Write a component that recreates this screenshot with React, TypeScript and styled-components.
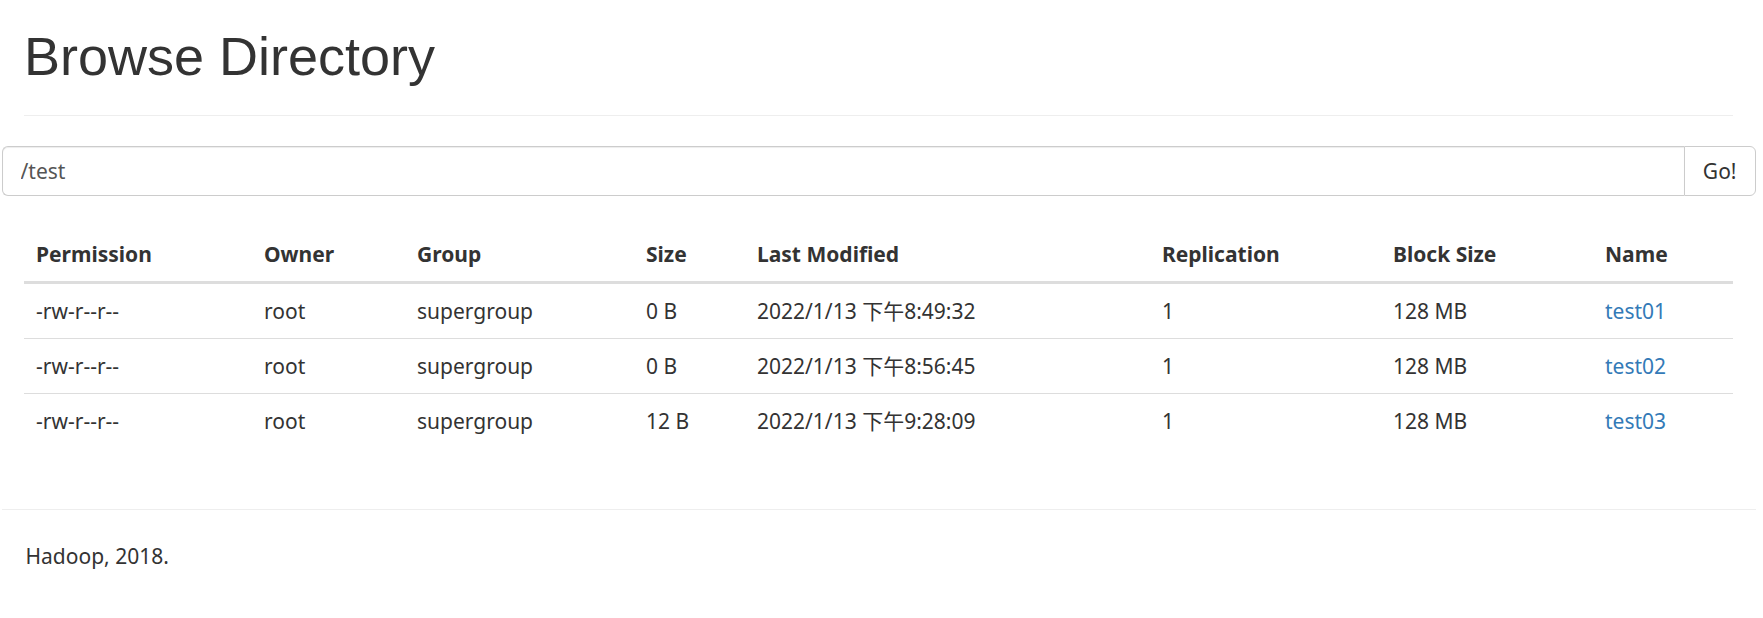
import styled, { createGlobalStyle } from "styled-components";

const GlobalStyle = createGlobalStyle`
	body {
		margin: 0;
		background: #fff;
		color: #333;
		font-family: "Noto Sans", "Noto Sans CJK SC", sans-serif;
		font-size: 21px;
		line-height: 30px;
	}
`;

const Page = styled.div`
	padding: 0 30px 0 24px;
`;

const PageHeader = styled.div`
	padding-bottom: 14px;
	border-bottom: 1px solid #eee;
`;

const Title = styled.h1`
	margin: 27px 0 15px;
	font-family: "Liberation Sans", Arial, sans-serif;
	font-size: 54px;
	font-weight: 400;
	line-height: 59px;
	color: #333;
`;

const SearchRow = styled.div`
	display: flex;
	margin: 30px -22.5px 0;
	height: 50px;
`;

const PathInput = styled.input`
	flex: 1;
	min-width: 0;
	height: 50px;
	box-sizing: border-box;
	padding: 0 18px;
	border: 1px solid #ccc;
	border-right: 0;
	border-radius: 6px 0 0 6px;
	box-shadow: inset 0 1px 1px rgba(0, 0, 0, 0.075);
	font-family: inherit;
	font-size: 21px;
	color: #555;
	outline: none;
`;

const GoButton = styled.button`
	height: 50px;
	box-sizing: border-box;
	padding: 0 18px;
	border: 1px solid #ccc;
	border-radius: 0 6px 6px 0;
	background: #fff;
	font-family: inherit;
	font-size: 21px;
	color: #333;
`;

const Table = styled.table`
	width: 100%;
	margin-top: 31px;
	border-collapse: collapse;
	table-layout: fixed;

	th,
	td {
		padding: 12px;
		text-align: left;
		line-height: 30px;
		white-space: nowrap;
	}

	th {
		font-weight: 700;
		border-bottom: 3px solid #ddd;
	}

	tbody tr + tr td {
		border-top: 1.5px solid #ddd;
	}

	a {
		color: #337ab7;
		text-decoration: none;
	}
`;

const Footer = styled.div`
	margin: 61px -22.5px 0;
	padding: 31px 24px 40px;
	border-top: 1px solid #eee;
`;

interface FileRow {
	permission: string;
	owner: string;
	group: string;
	size: string;
	modified: string;
	replication: number;
	blockSize: string;
	name: string;
}

const columns = [
	{ title: "Permission", width: 228 },
	{ title: "Owner", width: 153 },
	{ title: "Group", width: 229 },
	{ title: "Size", width: 111 },
	{ title: "Last Modified", width: 405 },
	{ title: "Replication", width: 231 },
	{ title: "Block Size", width: 212 },
	{ title: "Name", width: 140 },
];

const App = () => {
	const files: FileRow[] = [
		{ permission: "-rw-r--r--", owner: "root", group: "supergroup", size: "0 B", modified: "2022/1/13 下午8:49:32", replication: 1, blockSize: "128 MB", name: "test01" },
		{ permission: "-rw-r--r--", owner: "root", group: "supergroup", size: "0 B", modified: "2022/1/13 下午8:56:45", replication: 1, blockSize: "128 MB", name: "test02" },
		{ permission: "-rw-r--r--", owner: "root", group: "supergroup", size: "12 B", modified: "2022/1/13 下午9:28:09", replication: 1, blockSize: "128 MB", name: "test03" },
	];

	return (
		<Page>
			<GlobalStyle />
			<PageHeader>
				<Title>Browse Directory</Title>
			</PageHeader>
			<SearchRow>
				<PathInput defaultValue="/test" />
				<GoButton>Go!</GoButton>
			</SearchRow>
			<Table>
				<colgroup>
					{columns.map((col) => (
						<col key={col.title} style={{ width: col.width }} />
					))}
				</colgroup>
				<thead>
					<tr>
						{columns.map((col) => (
							<th key={col.title}>{col.title}</th>
						))}
					</tr>
				</thead>
				<tbody>
					{files.map((file) => (
						<tr key={file.name}>
							<td>{file.permission}</td>
							<td>{file.owner}</td>
							<td>{file.group}</td>
							<td>{file.size}</td>
							<td>{file.modified}</td>
							<td>{file.replication}</td>
							<td>{file.blockSize}</td>
							<td>
								<a href="#">{file.name}</a>
							</td>
						</tr>
					))}
				</tbody>
			</Table>
			<Footer>Hadoop, 2018.</Footer>
		</Page>
	);
};

export default App;
